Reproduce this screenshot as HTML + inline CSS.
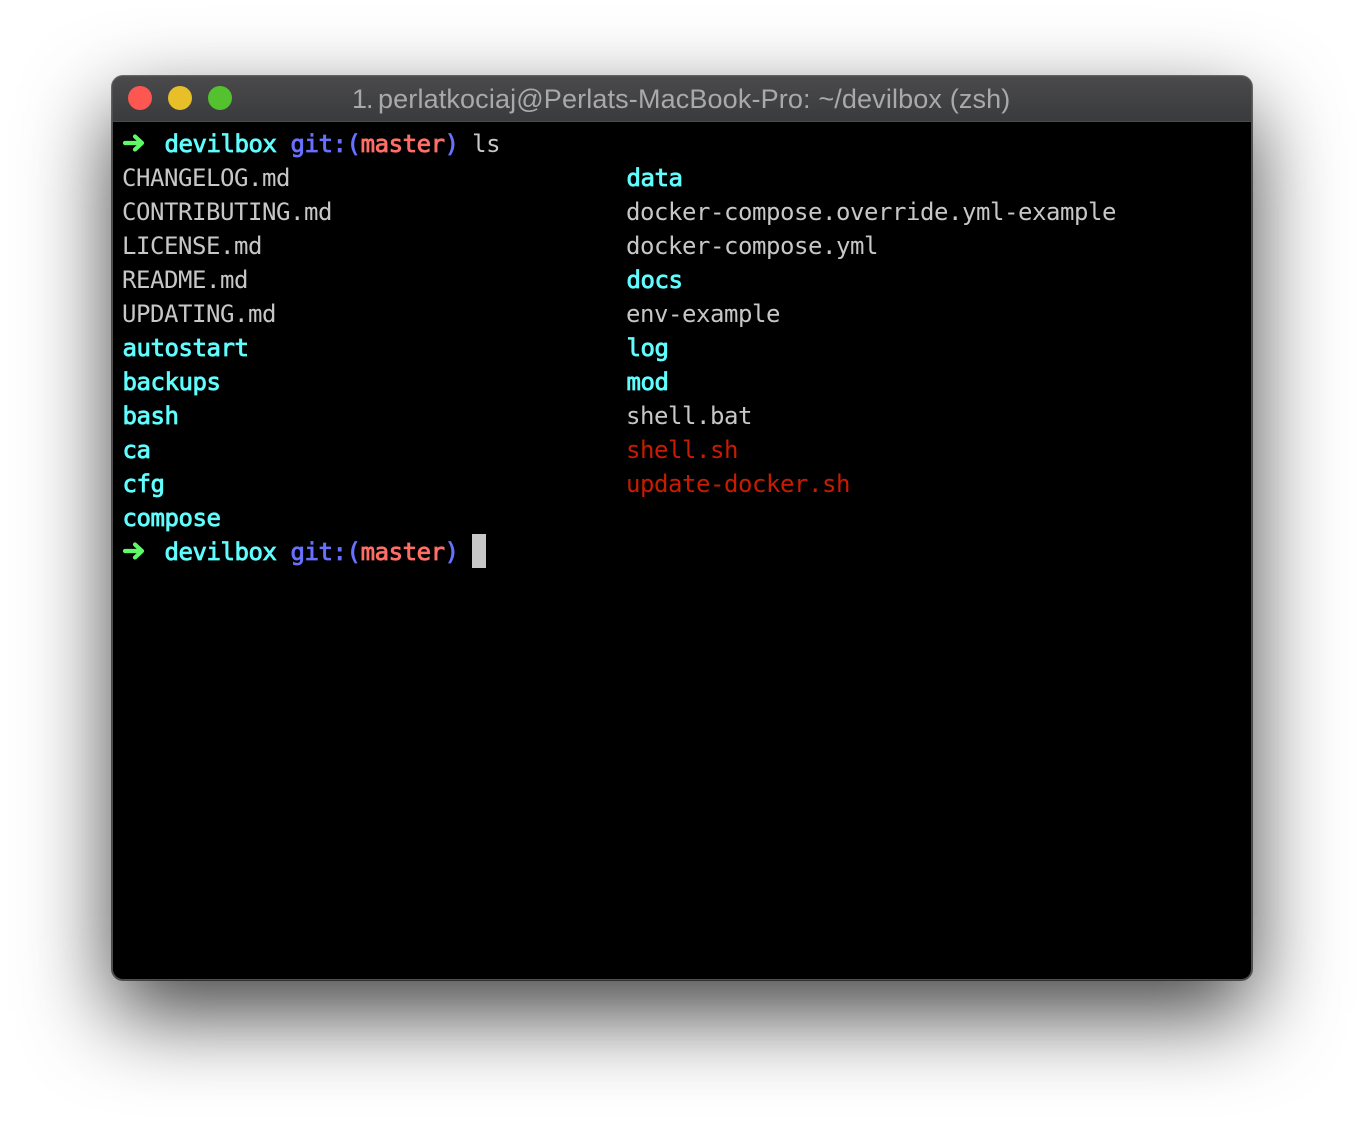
<!DOCTYPE html>
<html>
<head>
<meta charset="utf-8">
<style>
html,body{margin:0;padding:0;background:#fff;}
body{width:1364px;height:1128px;overflow:hidden;position:relative;}
#shadow{position:absolute;left:112px;top:76px;width:1140px;height:904px;border-radius:11px;
  box-shadow:0 34px 86px rgba(0,0,0,.74);}
#win{position:absolute;left:112px;top:76px;width:1140px;height:904px;border-radius:11px;background:#000;overflow:hidden;}
#edge{position:absolute;left:112px;top:76px;width:1140px;height:904px;border-radius:11px;box-shadow:inset 0 0 0 1px #505050,0 0 0 1px rgba(0,0,0,.55);z-index:5;}
#bar{position:absolute;left:0;top:0;width:1140px;height:46px;background:linear-gradient(#4a4a4c,#3a3b3d);box-sizing:border-box;border-bottom:1px solid #4c4c4c;}
.dot{position:absolute;top:86px;width:24px;height:24px;border-radius:50%;z-index:7;}
.title{position:absolute;top:82px;height:34px;font:27px/34px "Liberation Sans",sans-serif;color:#a9a9aa;white-space:pre;z-index:7;}
.l{position:absolute;height:34px;line-height:34px;font-family:"DejaVu Sans Mono","Liberation Mono",monospace;font-size:24px;letter-spacing:-.448px;white-space:pre;color:#c7c7c7;z-index:7;margin-top:1px;}
.c1{left:122px;}.c2{left:626px;}
.b{font-weight:normal;-webkit-text-stroke:.8px;position:relative;left:.5px;}
div.b{position:absolute;margin-left:.5px;left:auto;}
div.c1.b{left:122px;}
div.c2.b{left:626px;}
.cy{color:#60fdff;}
.bl{color:#6871ff;}
.rd{color:#ff6e67;}
.ex{color:#c91b00;}
</style>
</head>
<body>
<div id="shadow"></div>
<div id="win"><div id="bar"></div></div>
<div id="edge"></div>
<div class="dot" style="left:128px;background:#fe5650;"></div>
<div class="dot" style="left:168px;background:#e6bf29;"></div>
<div class="dot" style="left:208px;background:#53c22e;"></div>
<div class="title" style="left:352px;letter-spacing:-1px">1.</div>
<div class="title" style="left:378px;letter-spacing:.14px">perlatkociaj@Perlats-MacBook-Pro: ~/devilbox (zsh)</div>

<svg style="position:absolute;left:120px;top:130px;z-index:7" width="28" height="28" viewBox="0 0 28 28"><path d="M5 13H21M15 6.5L22 13L15 19.5" fill="none" stroke="#5ffa68" stroke-width="4.2" stroke-linecap="round" stroke-linejoin="round"/></svg>
<div class="l c1" style="top:126px">   <span class="b cy">devilbox</span> <span class="b bl">git:(</span><span class="b rd">master</span><span class="b bl">)</span> ls</div>

<div class="l c1" style="top:160px">CHANGELOG.md</div>
<div class="l c1" style="top:194px">CONTRIBUTING.md</div>
<div class="l c1" style="top:228px">LICENSE.md</div>
<div class="l c1" style="top:262px">README.md</div>
<div class="l c1" style="top:296px">UPDATING.md</div>
<div class="l c1 b cy" style="top:330px">autostart</div>
<div class="l c1 b cy" style="top:364px">backups</div>
<div class="l c1 b cy" style="top:398px">bash</div>
<div class="l c1 b cy" style="top:432px">ca</div>
<div class="l c1 b cy" style="top:466px">cfg</div>
<div class="l c1 b cy" style="top:500px">compose</div>

<div class="l c2 b cy" style="top:160px">data</div>
<div class="l c2" style="top:194px">docker-compose.override.yml-example</div>
<div class="l c2" style="top:228px">docker-compose.yml</div>
<div class="l c2 b cy" style="top:262px">docs</div>
<div class="l c2" style="top:296px">env-example</div>
<div class="l c2 b cy" style="top:330px">log</div>
<div class="l c2 b cy" style="top:364px">mod</div>
<div class="l c2" style="top:398px">shell.bat</div>
<div class="l c2 ex" style="top:432px">shell.sh</div>
<div class="l c2 ex" style="top:466px">update-docker.sh</div>

<svg style="position:absolute;left:120px;top:538px;z-index:7" width="28" height="28" viewBox="0 0 28 28"><path d="M5 13H21M15 6.5L22 13L15 19.5" fill="none" stroke="#5ffa68" stroke-width="4.2" stroke-linecap="round" stroke-linejoin="round"/></svg>
<div class="l c1" style="top:534px">   <span class="b cy">devilbox</span> <span class="b bl">git:(</span><span class="b rd">master</span><span class="b bl">)</span></div>
<div style="position:absolute;left:472px;top:534px;width:14px;height:34px;background:#c7c7c7;z-index:7"></div>
</body>
</html>
